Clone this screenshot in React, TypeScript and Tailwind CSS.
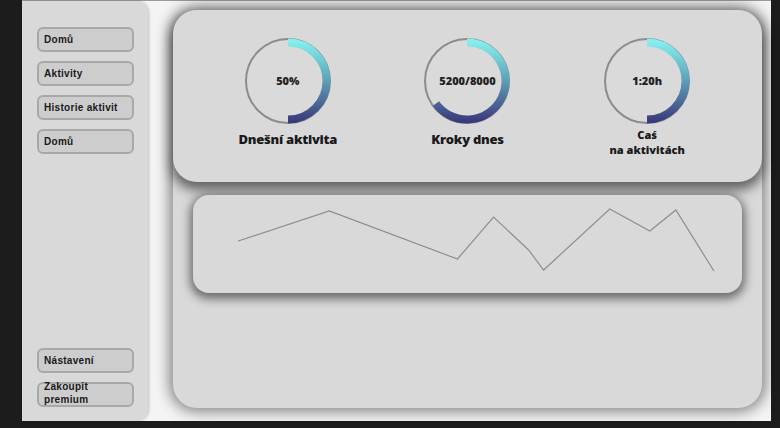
import React from 'react';

const navTop = ['Domů', 'Aktivity', 'Historie aktivit', 'Domů'];

const chartPoints = '45,46 136,16 264,64 300,22 335,55 350,75 416,14 456,36 482,15 520,76';

// arc from 12 o'clock clockwise, value 0..1
const arcPath = (value: number, r: number) => {
  const a = value * 2 * Math.PI;
  const x = 44 + r * Math.sin(a);
  const y = 44 - r * Math.cos(a);
  const large = value > 0.5 ? 1 : 0;
  return `M 44 ${44 - r} A ${r} ${r} 0 ${large} 1 ${x.toFixed(2)} ${y.toFixed(2)}`;
};

const Gauge = ({ id, value, label }: { id: string; value: number; label: string }) => (
  <div className="relative w-[88px] h-[88px]">
    <svg width="88" height="88" viewBox="0 0 88 88">
      <defs>
        <linearGradient id={id} x1="0" y1="4" x2="0" y2="84" gradientUnits="userSpaceOnUse">
          <stop offset="0" stopColor="#86f0ee" />
          <stop offset="0.45" stopColor="#5fa9bd" />
          <stop offset="1" stopColor="#3b3a7c" />
        </linearGradient>
      </defs>
      <circle cx="44" cy="44" r="42" fill="#dadada" stroke="#8c8c8c" strokeWidth="2" />
      <path d={arcPath(value, 38.5)} fill="none" stroke={`url(#${id})`} strokeWidth="8" />
    </svg>
    <div className="absolute inset-0 flex items-center justify-center text-[11px] font-extrabold text-[#222]">
      {label}
    </div>
  </div>
);

const NavButton = ({ children }: { children: React.ReactNode }) => (
  <button className="w-[97px] h-[25px] rounded-[6px] border-2 border-[#a8a8a8] bg-[#cdcdcd] pl-[5px] text-left text-[10px] font-bold tracking-[0.03em] text-[#1a1a1a]">
    {children}
  </button>
);

export default function App() {
  return (
    <div
      className="w-[780px] h-[428px] bg-[#1c1c1c] pl-[22px]"
      style={{ fontFamily: '"Liberation Sans", Arial, sans-serif' }}
    >
      <div className="flex w-[749px] h-[421px] bg-[#f4f4f4] border-t border-[#9a9a9a]">
        {/* sidebar */}
        <aside className="w-[126px] h-full bg-[#d9d9d9] rounded-r-[12px] flex flex-col justify-between pl-[15px] pt-[26px] pb-[14px] shadow-[1px_0_3px_rgba(0,0,0,0.2)]">
          <div className="flex flex-col gap-[9px]">
            {navTop.map((item, i) => (
              <NavButton key={i}>{item}</NavButton>
            ))}
          </div>
          <div className="flex flex-col gap-[10px]">
            <NavButton>Nástavení</NavButton>
            <button className="w-[97px] h-[25px] rounded-[6px] border-2 border-[#a8a8a8] bg-[#cdcdcd] pl-[5px] text-left text-[10px] font-bold tracking-[0.03em] leading-[13px] text-[#1a1a1a] flex items-start -mt-[1px]">
              <span className="-mt-[4px]">
                Zakoupit
                <br />
                premium
              </span>
            </button>
          </div>
        </aside>

        {/* main */}
        <main className="flex-1 pl-[25px] pr-[9px] pt-[9px] pb-[13px]">
          <div className="h-full rounded-[24px] bg-[#d9d9d9] shadow-[0_0_14px_4px_rgba(0,0,0,0.45)]">
            <section
              className="h-[172px] rounded-[24px] bg-[#d9d9d9] shadow-[0_6px_12px_2px_rgba(0,0,0,0.55)] grid grid-cols-3 px-[25px] pt-[27px]"
              style={{ fontFamily: '"Open Sans", sans-serif' }}
            >
              <div className="flex flex-col items-center">
                <Gauge id="g1" value={0.5} label="50%" />
                <div className="mt-[5px] text-[13px] font-extrabold tracking-[-0.02em] text-[#1a1a1a]">Dnešní aktivita</div>
              </div>
              <div className="flex flex-col items-center">
                <Gauge id="g2" value={0.65} label="5200/8000" />
                <div className="mt-[5px] text-[13px] font-extrabold tracking-[-0.02em] text-[#1a1a1a]">Kroky dnes</div>
              </div>
              <div className="flex flex-col items-center">
                <Gauge id="g3" value={0.5} label="1:20h" />
                <div className="mt-[2px] text-[11px] leading-[15px] font-extrabold text-center text-[#1a1a1a]">
                  Caś
                  <br />
                  na aktivitách
                </div>
              </div>
            </section>

            <div className="px-[20px] pt-[13px]">
              <div className="h-[98px] rounded-[16px] bg-[#d9d9d9] shadow-[0_3px_10px_3px_rgba(0,0,0,0.5)]">
                <svg width="100%" height="98" viewBox="0 0 548 98" preserveAspectRatio="none">
                  <polyline points={chartPoints} fill="none" stroke="#8e8e8e" strokeWidth="1.2" />
                </svg>
              </div>
            </div>
          </div>
        </main>
      </div>
    </div>
  );
}
